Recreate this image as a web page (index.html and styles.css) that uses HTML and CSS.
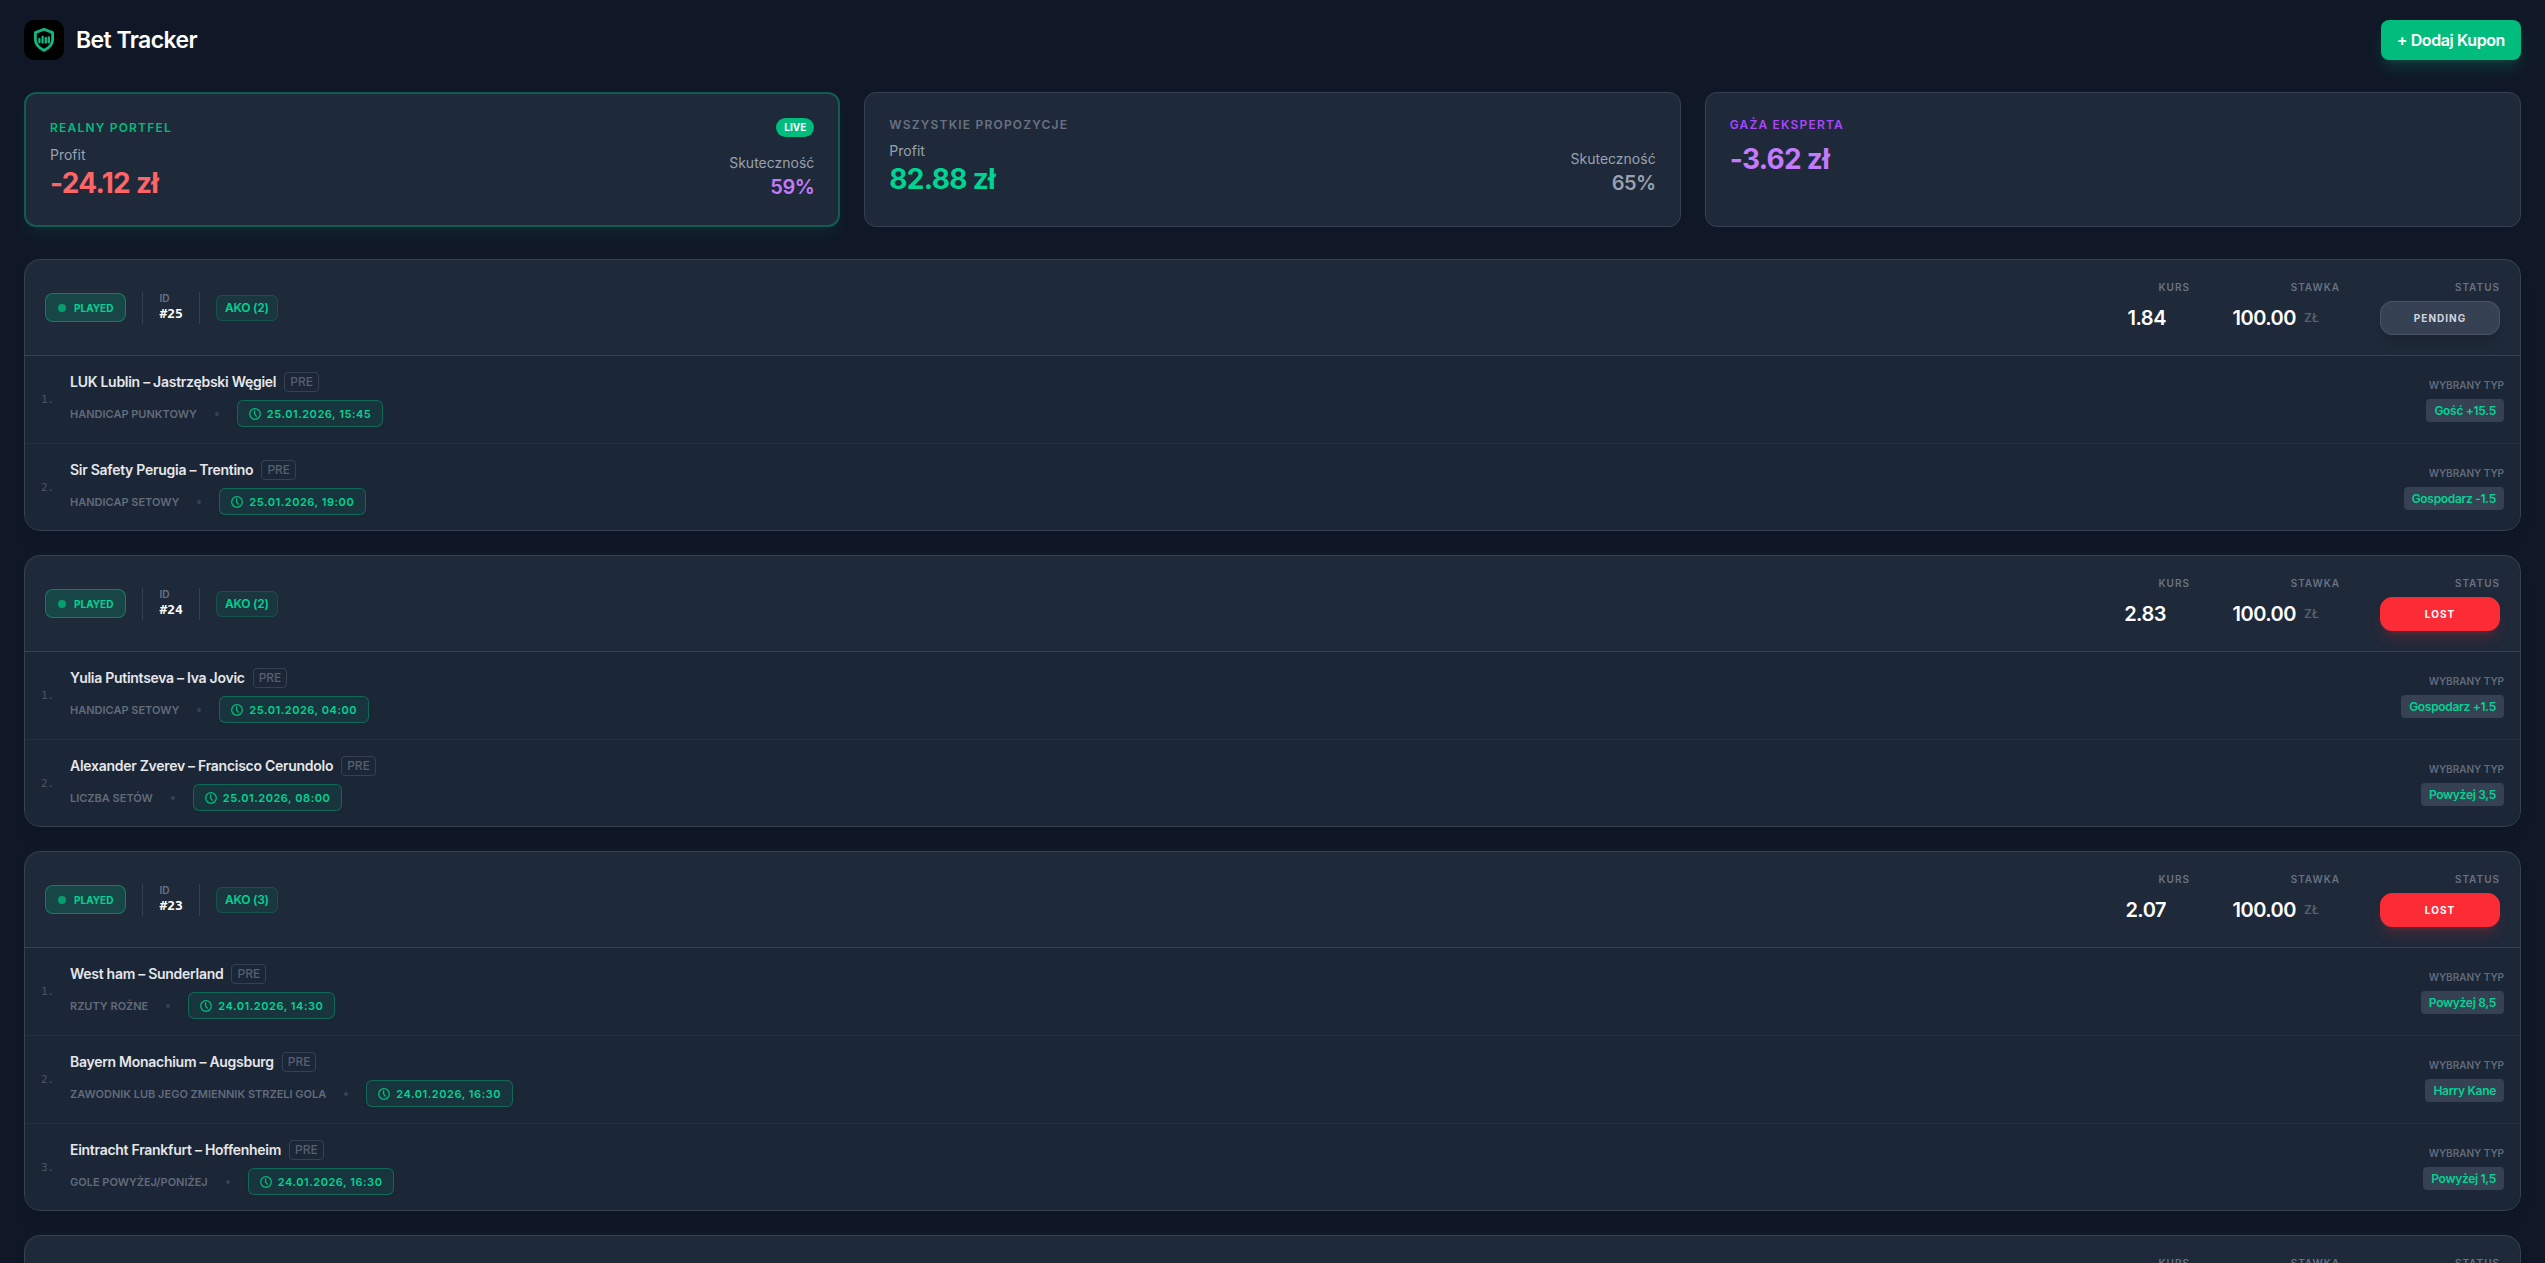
FILE: index.html
```html
<!DOCTYPE html>
<html lang="pl">
<head>
<meta charset="utf-8">
<meta name="viewport" content="width=device-width, initial-scale=1">
<title>Bet Tracker</title>
<link rel="stylesheet" href="styles.css">
</head>
<body>
<svg width="0" height="0" class="sprite" aria-hidden="true">
  <symbol id="clock" viewBox="0 0 12 12">
    <circle cx="6" cy="6" r="5.3" fill="none" stroke="currentColor" stroke-width="1.3"/>
    <path d="M5.6 3v3.2L7.3 8.2" fill="none" stroke="currentColor" stroke-width="1.3" stroke-linecap="round" stroke-linejoin="round"/>
  </symbol>
</svg>
<div class="page">
  <header class="topbar">
    <div class="brand">
      <svg class="logo" viewBox="0 0 40 40" aria-hidden="true">
        <rect width="40" height="40" rx="10" fill="#000"/>
        <path d="M20 9.2 28.6 12.6v7.2c0 4.6-3.6 8.2-8.6 10.6-5-2.4-8.6-6-8.6-10.6v-7.2z" fill="none" stroke="#10b981" stroke-width="2.8" stroke-linejoin="round"/>
        <path d="M15.4 19v3.2M18.6 16.8v5.8M21.8 18v4.6M24.8 17.4v4.8" stroke="#10b981" stroke-width="2.3" stroke-linecap="round"/>
      </svg>
      <h1>Bet Tracker</h1>
    </div>
    <button class="add" type="button">+ Dodaj Kupon</button>
  </header>

  <main>
    <section class="stats">
      <article class="stat live">
        <div class="stat-head"><h2 class="green">Realny portfel</h2><span class="live-tag">LIVE</span></div>
        <div class="stat-body">
          <div><p class="caption">Profit</p><p class="amount loss">-24.12 zł</p></div>
          <div class="rate"><p class="caption">Skuteczność</p><p class="percent purple">59%</p></div>
        </div>
      </article>
      <article class="stat">
        <div class="stat-head"><h2>Wszystkie propozycje</h2></div>
        <div class="stat-body">
          <div><p class="caption">Profit</p><p class="amount gain">82.88 zł</p></div>
          <div class="rate"><p class="caption">Skuteczność</p><p class="percent">65%</p></div>
        </div>
      </article>
      <article class="stat">
        <div class="stat-head"><h2 class="violet">Gaża eksperta</h2></div>
        <p class="amount purple">-3.62 zł</p>
      </article>
    </section>

    <section class="coupons">
      <article class="coupon">
        <header class="coupon-head">
          <div class="meta">
            <button class="played" type="button"><i></i>PLAYED</button>
            <div class="id"><span>ID</span><b>#25</b></div>
            <span class="kind">AKO (2)</span>
          </div>
          <div class="fields">
            <div class="field odds"><label for="odds25">Kurs</label><input id="odds25" value="1.84" inputmode="decimal"></div>
            <div class="field stake"><label for="stake25">Stawka</label><div class="money"><input id="stake25" value="100.00" inputmode="decimal"><span>ZŁ</span></div></div>
            <div class="field"><label for="status25">Status</label><select id="status25" class="status"><option>PENDING</option><option>WON</option><option>LOST</option></select></div>
          </div>
        </header>
        <ol class="bets">
          <li>
            <span class="num">1.</span>
            <div class="bet">
              <div class="title"><h3>LUK Lublin – Jastrzębski Węgiel</h3><span class="pre">PRE</span></div>
              <div class="detail"><span class="market">Handicap punktowy</span><i class="dot"></i><time><svg><use href="#clock"/></svg>25.01.2026, 15:45</time></div>
            </div>
            <div class="pick"><span>Wybrany typ</span><b>Gość +15.5</b></div>
          </li>
          <li>
            <span class="num">2.</span>
            <div class="bet">
              <div class="title"><h3>Sir Safety Perugia – Trentino</h3><span class="pre">PRE</span></div>
              <div class="detail"><span class="market">Handicap setowy</span><i class="dot"></i><time><svg><use href="#clock"/></svg>25.01.2026, 19:00</time></div>
            </div>
            <div class="pick"><span>Wybrany typ</span><b>Gospodarz -1.5</b></div>
          </li>
        </ol>
      </article>

      <article class="coupon">
        <header class="coupon-head">
          <div class="meta">
            <button class="played" type="button"><i></i>PLAYED</button>
            <div class="id"><span>ID</span><b>#24</b></div>
            <span class="kind">AKO (2)</span>
          </div>
          <div class="fields">
            <div class="field odds"><label for="odds24">Kurs</label><input id="odds24" value="2.83" inputmode="decimal"></div>
            <div class="field stake"><label for="stake24">Stawka</label><div class="money"><input id="stake24" value="100.00" inputmode="decimal"><span>ZŁ</span></div></div>
            <div class="field"><label for="status24">Status</label><select id="status24" class="status lost"><option>PENDING</option><option>WON</option><option selected>LOST</option></select></div>
          </div>
        </header>
        <ol class="bets">
          <li>
            <span class="num">1.</span>
            <div class="bet">
              <div class="title"><h3>Yulia Putintseva – Iva Jovic</h3><span class="pre">PRE</span></div>
              <div class="detail"><span class="market">Handicap setowy</span><i class="dot"></i><time><svg><use href="#clock"/></svg>25.01.2026, 04:00</time></div>
            </div>
            <div class="pick"><span>Wybrany typ</span><b>Gospodarz +1.5</b></div>
          </li>
          <li>
            <span class="num">2.</span>
            <div class="bet">
              <div class="title"><h3>Alexander Zverev – Francisco Cerundolo</h3><span class="pre">PRE</span></div>
              <div class="detail"><span class="market">Liczba setów</span><i class="dot"></i><time><svg><use href="#clock"/></svg>25.01.2026, 08:00</time></div>
            </div>
            <div class="pick"><span>Wybrany typ</span><b>Powyżej 3,5</b></div>
          </li>
        </ol>
      </article>

      <article class="coupon">
        <header class="coupon-head">
          <div class="meta">
            <button class="played" type="button"><i></i>PLAYED</button>
            <div class="id"><span>ID</span><b>#23</b></div>
            <span class="kind">AKO (3)</span>
          </div>
          <div class="fields">
            <div class="field odds"><label for="odds23">Kurs</label><input id="odds23" value="2.07" inputmode="decimal"></div>
            <div class="field stake"><label for="stake23">Stawka</label><div class="money"><input id="stake23" value="100.00" inputmode="decimal"><span>ZŁ</span></div></div>
            <div class="field"><label for="status23">Status</label><select id="status23" class="status lost"><option>PENDING</option><option>WON</option><option selected>LOST</option></select></div>
          </div>
        </header>
        <ol class="bets">
          <li>
            <span class="num">1.</span>
            <div class="bet">
              <div class="title"><h3>West ham – Sunderland</h3><span class="pre">PRE</span></div>
              <div class="detail"><span class="market">Rzuty rożne</span><i class="dot"></i><time><svg><use href="#clock"/></svg>24.01.2026, 14:30</time></div>
            </div>
            <div class="pick"><span>Wybrany typ</span><b>Powyżej 8,5</b></div>
          </li>
          <li>
            <span class="num">2.</span>
            <div class="bet">
              <div class="title"><h3>Bayern Monachium – Augsburg</h3><span class="pre">PRE</span></div>
              <div class="detail"><span class="market">Zawodnik lub jego zmiennik strzeli gola</span><i class="dot"></i><time><svg><use href="#clock"/></svg>24.01.2026, 16:30</time></div>
            </div>
            <div class="pick"><span>Wybrany typ</span><b>Harry Kane</b></div>
          </li>
          <li>
            <span class="num">3.</span>
            <div class="bet">
              <div class="title"><h3>Eintracht Frankfurt – Hoffenheim</h3><span class="pre">PRE</span></div>
              <div class="detail"><span class="market">Gole powyżej/poniżej</span><i class="dot"></i><time><svg><use href="#clock"/></svg>24.01.2026, 16:30</time></div>
            </div>
            <div class="pick"><span>Wybrany typ</span><b>Powyżej 1,5</b></div>
          </li>
        </ol>
      </article>

      <article class="coupon">
        <header class="coupon-head">
          <div class="fields">
            <div class="field odds"><label for="odds22">Kurs</label><input id="odds22" inputmode="decimal"></div>
            <div class="field stake"><label for="stake22">Stawka</label><div class="money"><input id="stake22" inputmode="decimal"></div></div>
            <div class="field"><label for="status22">Status</label><select id="status22" class="status"></select></div>
          </div>
        </header>
      </article>
    </section>
  </main>
</div>
</body>
</html>
```
FILE: styles.css
```css
*, *::before, *::after { box-sizing: border-box; }

:root {
  --bg: #101828;
  --card: #1e2939;
  --line: #364153;
  --muted: #6a7282;
  --soft: #99a1af;
  --green: #00bc7d;
  --mint: #00d492;
  --purple: #c27aff;
}

html { background: var(--bg); scrollbar-width: none; }

body {
  margin: 0;
  background: var(--bg);
  color: #fff;
  font: 14px/20px Inter, "Liberation Sans", sans-serif;
}

h1, h2, h3, p { margin: 0; font-weight: inherit; }
button, input, select { font: inherit; color: inherit; margin: 0; }
.sprite { position: absolute; }
.page { padding: 20px 24px; }

/* Top bar */
.topbar { display: flex; justify-content: space-between; align-items: center; margin-bottom: 32px; }
.brand { display: flex; align-items: center; gap: 12px; }
.logo { width: 40px; height: 40px; }
h1 { font-size: 23px; line-height: 32px; font-weight: 600; letter-spacing: -0.025em; }
.add {
  height: 40px;
  padding: 0 16px;
  border: 0;
  border-radius: 8px;
  background: var(--green);
  font-size: 16px;
  font-weight: 600;
  letter-spacing: -0.025em;
  box-shadow: 0 10px 15px -3px #00bc7d33, 0 4px 6px -4px #00bc7d33;
}

/* Summary cards */
.stats { display: grid; grid-template-columns: repeat(3, 1fr); gap: 24px; margin-bottom: 32px; }
.stat { padding: 24px; border: 1px solid var(--line); border-radius: 12px; background: var(--card); }
.stat.live { border: 2px solid #00bc7d59; box-shadow: 0 10px 15px -3px #00bc7d14, 0 4px 6px -4px #00bc7d14; }
.stat-head { display: flex; justify-content: space-between; align-items: center; margin-bottom: 8px; }
h2 { color: var(--muted); font-size: 12px; line-height: 16px; font-weight: 600; letter-spacing: 0.1em; text-transform: uppercase; }
h2.green { color: var(--green); }
h2.violet { color: #ad46ff; }
.live-tag { padding: 2px 8px; border-radius: 10px; background: var(--green); font-size: 10px; line-height: 15px; font-weight: 700; }
.stat-body { display: flex; justify-content: space-between; align-items: flex-end; }
.caption { color: var(--soft); }
.amount { font-size: 28px; line-height: 36px; font-weight: 700; letter-spacing: -0.025em; }
.rate { text-align: right; }
.percent { font-size: 20px; line-height: 28px; font-weight: 600; letter-spacing: -0.025em; color: var(--soft); }
.loss { color: #ff6467; }
.gain { color: var(--mint); }
.purple { color: var(--purple); }

/* Coupons */
.coupons { display: grid; gap: 24px; }
.coupon { border: 1px solid var(--line); border-radius: 16px; background: var(--card); overflow: hidden; box-shadow: 0 10px 15px -3px #0000001a, 0 4px 6px -4px #0000001a; }
.coupon-head { display: flex; justify-content: space-between; align-items: center; padding: 20px; border-bottom: 1px solid var(--line); }
.meta { display: flex; align-items: center; gap: 16px; }
.played {
  display: flex;
  align-items: center;
  gap: 8px;
  height: 29px;
  padding: 0 12px;
  border: 1px solid #00bc7d80;
  border-radius: 8px;
  background: #00bc7d33;
  color: var(--mint);
  font-size: 10px;
  font-weight: 700;
}
.played i { width: 8px; height: 8px; border-radius: 50%; background: #079e6d; }
.id { display: grid; padding: 0 16px; border: solid var(--line); border-width: 0 1px; }
.id span { color: var(--muted); font-size: 10px; line-height: 12px; font-weight: 600; }
.id b { font: 700 13px/20px "DejaVu Sans Mono", monospace; }
.kind { padding: 4px 8px; border: 1px solid #00bc7d33; border-radius: 6px; background: #00bc7d1a; color: var(--mint); font-size: 12px; line-height: 16px; font-weight: 600; letter-spacing: -0.02em; }

.fields { display: flex; gap: 40px; margin-left: auto; }
.field { display: grid; gap: 6px; justify-items: end; }
.field label { color: var(--muted); font-size: 10px; line-height: 15px; font-weight: 600; letter-spacing: 0.1em; text-transform: uppercase; }
.field input { height: 34px; padding: 0; border: 0; background: none; font-size: 20px; font-weight: 600; letter-spacing: -0.025em; text-align: right; }
.odds input { width: 96px; padding-right: 24px; }
.stake { width: 110px; justify-items: stretch; }
.stake label { text-align: right; }
.money { display: flex; align-items: center; gap: 8px; }
.money input { width: 66px; }
.money span { color: #566071; font-size: 12px; font-weight: 600; }
.status {
  width: 120px;
  height: 34px;
  padding: 0 12px;
  border: 1px solid #4a5565;
  border-radius: 12px;
  background: var(--line);
  color: #d1d5dc;
  appearance: none;
  font-size: 10px;
  font-weight: 700;
  letter-spacing: 0.1em;
  text-align: center;
  text-align-last: center;
  box-shadow: 0 10px 15px -3px #0000001a, 0 4px 6px -4px #0000001a;
}
.status.lost { border-color: #fb2c36; background: #fb2c36; color: #fff; box-shadow: 0 10px 15px -3px #fb2c3633, 0 4px 6px -4px #fb2c3633; }

.bets { margin: 0; padding: 0; list-style: none; background: #1b2636; }
.bets li { display: flex; align-items: center; padding: 16px; border-bottom: 1px solid #232f40; }
.bets li:last-child { padding-bottom: 15px; border-bottom: 0; }
.num { width: 29px; color: #4a5565; font: 11px/20px "DejaVu Sans Mono", monospace; }
.bet { flex: 1; display: grid; gap: 8px; }
.title { display: flex; align-items: center; gap: 8px; }
h3 { color: #e5e7eb; font-size: 14px; line-height: 20px; font-weight: 600; letter-spacing: -0.02em; }
.pre { padding: 0 5px; border: 1px solid var(--line); border-radius: 4px; color: #566071; font-size: 12px; line-height: 18px; font-weight: 500; }
.detail { display: flex; align-items: center; gap: 18px; }
.market { color: #626b7b; font-size: 11px; font-weight: 600; text-transform: uppercase; }
.dot { width: 4px; height: 4px; border-radius: 50%; background: var(--line); }
time {
  display: flex;
  align-items: center;
  gap: 6px;
  height: 27px;
  padding: 0 11px;
  border: 1px solid #00bc7d66;
  border-radius: 6px;
  background: #00bc7d1a;
  color: var(--mint);
  font-size: 11px;
  font-weight: 600;
  letter-spacing: 0.05em;
  box-shadow: 0 1px 3px #0000001a;
}
time svg { width: 12px; height: 12px; color: #00bc7d; }
.pick { display: grid; gap: 6px; justify-items: end; }
.pick span { color: #626b7b; font-size: 10px; line-height: 15px; font-weight: 600; text-transform: uppercase; }
.pick b { padding: 0 8px; border-radius: 4px; background: var(--line); color: var(--mint); font-size: 12px; line-height: 23px; font-weight: 600; letter-spacing: -0.025em; }
```
